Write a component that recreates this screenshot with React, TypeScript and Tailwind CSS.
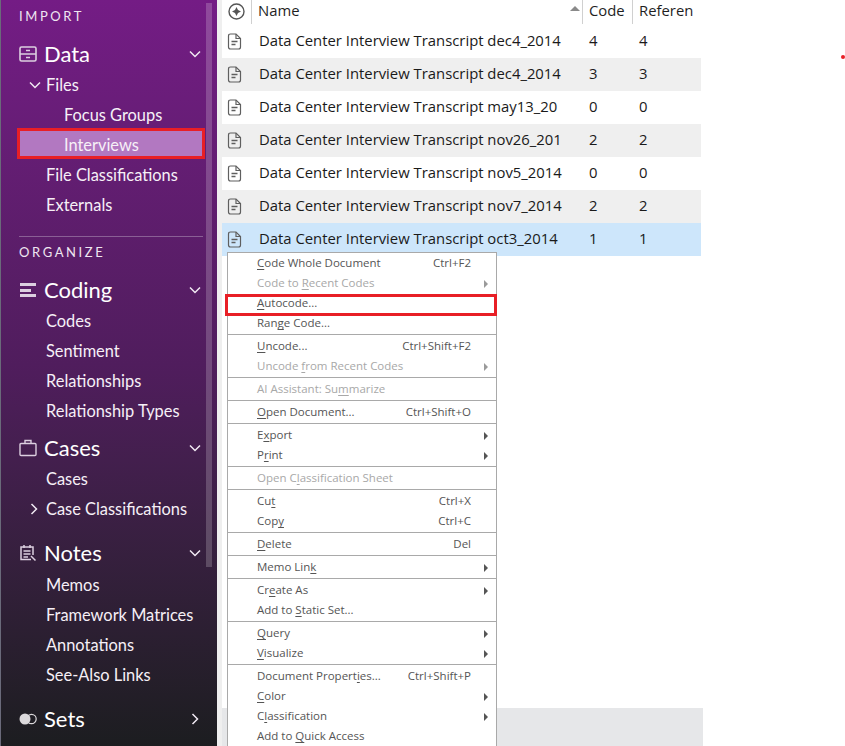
import React from "react";

const Chevron = ({ dir = "down", className = "" }: { dir?: "down" | "right"; className?: string }) => (
  <svg width="12" height="12" viewBox="0 0 12 12" className={className} fill="none" stroke="#f1e9f3" strokeWidth="1.5">
    {dir === "down" ? <path d="M1 3.5 L6 8.5 L11 3.5" /> : <path d="M3.5 1 L8.5 6 L3.5 11" />}
  </svg>
);

const DataIcon = () => (
  <svg width="18" height="18" viewBox="0 0 18 18" fill="none" stroke="#dccfe0" strokeWidth="1.6">
    <rect x="1" y="2" width="16" height="14" rx="1.5" />
    <path d="M1 9 H17 M7 5.5 H11 M7 12.5 H11" />
  </svg>
);
const CodingIcon = () => (
  <svg width="18" height="18" viewBox="0 0 18 18" fill="#dccfe0">
    <rect x="1" y="2" width="16" height="3" />
    <rect x="1" y="8" width="11" height="3" />
    <rect x="1" y="13" width="16" height="3" />
  </svg>
);
const CasesIcon = () => (
  <svg width="18" height="18" viewBox="0 0 18 18" fill="none" stroke="#dccfe0" strokeWidth="1.4">
    <rect x="1" y="4.5" width="16" height="12" rx="1" />
    <path d="M6 4.5 V1.5 H12 V4.5" />
  </svg>
);
const NotesIcon = () => (
  <svg width="18" height="18" viewBox="0 0 18 18" fill="none" stroke="#dccfe0" strokeWidth="1.5">
    <path d="M12 15.5 H2 V3 H14 V11" />
    <path d="M5 1 V4 M11 1 V4 M4.5 7 H11.5 M4.5 10 H11.5 M4.5 13 H9" />
    <path d="M12 12 L16.5 16.5" />
  </svg>
);
const SetsIcon = () => (
  <svg width="18" height="12" viewBox="0 0 18 12">
    <circle cx="6" cy="6" r="5.5" fill="#dcd9dc" />
    <circle cx="12.5" cy="6" r="4.7" fill="none" stroke="#dcd9dc" strokeWidth="1.2" />
  </svg>
);
const FileIcon = () => (
  <svg width="15" height="17" viewBox="0 0 15 17" fill="none" stroke="#5f5f5f" strokeWidth="1.2">
    <path d="M1.5 3 Q1.5 1 3.5 1 H9 L13.5 5.5 V14 Q13.5 16 11.5 16 H3.5 Q1.5 16 1.5 14 Z" />
    <path d="M9 1 V5.5 H13.5" />
    <path d="M4.5 8.5 H10.5 M4.5 11.5 H8.5" strokeWidth="1.3" />
  </svg>
);

const Heading = ({ icon, label, open = true, top }: { icon: React.ReactNode; label: string; open?: boolean; top: string }) => (
  <div className={`flex h-[30px] items-center pl-[19px] pr-[16px] ${top}`}>
    <span className="flex w-[25px] shrink-0 items-center">{icon}</span>
    <span className="flex-1 pb-[2px] text-[22px] text-white">{label}</span>
    <Chevron dir={open ? "down" : "right"} />
  </div>
);

const Item = ({ children, pl = "pl-[46px]" }: { children: React.ReactNode; pl?: string }) => (
  <div className={`flex h-[30px] items-center pt-[2px] text-[16.4px] text-[#f6f0f7] ${pl}`}>{children}</div>
);

const Caption = ({ children }: { children: React.ReactNode }) => (
  <div className="pl-[19px] text-[13px] leading-[16px] tracking-[0.2em] text-[#efe6f1]">{children}</div>
);

const Sidebar = () => (
  <aside className="relative h-[746px] w-[217px] shrink-0 overflow-hidden bg-gradient-to-b from-[#741c85] via-[#4f1d5c] to-[#1c1d20] font-['Lato',sans-serif]">
    <div className="pt-[8px]">
      <Caption>IMPORT</Caption>
      <Heading icon={<DataIcon />} label="Data" top="mt-[15px]" />
      <div className="flex h-[30px] items-center pl-[29px] pt-[2px] text-[16.4px] text-[#f6f0f7]">
        <Chevron className="mr-[5px]" />
        Files
      </div>
      <Item pl="pl-[64px]">Focus Groups</Item>
      <div className="relative flex h-[30px] items-center pl-[64px] pt-[2px] text-[16.4px] text-[#f6f0f7]">
        <div className="absolute left-[20px] top-0 h-[30px] w-[183px] bg-[#b278c1]" />
        <span className="relative">Interviews</span>
      </div>
      <Item>File Classifications</Item>
      <Item>Externals</Item>
      <div className="mx-[19px] mt-[17px] h-px w-[184px] bg-[#8a5f95]" />
      <div className="mt-[7px]"><Caption>ORGANIZE</Caption></div>
      <Heading icon={<CodingIcon />} label="Coding" top="mt-[15px]" />
      <Item>Codes</Item>
      <Item>Sentiment</Item>
      <Item>Relationships</Item>
      <Item>Relationship Types</Item>
      <Heading icon={<CasesIcon />} label="Cases" top="mt-[8px]" />
      <Item>Cases</Item>
      <div className="flex h-[30px] items-center pl-[28px] pt-[2px] text-[16.4px] text-[#f6f0f7]">
        <Chevron dir="right" className="mr-[6px]" />
        Case Classifications
      </div>
      <Heading icon={<NotesIcon />} label="Notes" top="mt-[15px] mb-[1px]" />
      <Item>Memos</Item>
      <Item>Framework Matrices</Item>
      <Item>Annotations</Item>
      <Item>See-Also Links</Item>
      <Heading icon={<SetsIcon />} label="Sets" open={false} top="mt-[15px]" />
    </div>
    <div className="absolute left-[206px] top-[3px] h-[564px] w-[6px] bg-white/20" />
    <div className="absolute left-0 top-0 h-full w-px bg-[#6a6a7a]" />
  </aside>
);

const rows = [
  ["Data Center Interview Transcript dec4_2014", "4", "4"],
  ["Data Center Interview Transcript dec4_2014", "3", "3"],
  ["Data Center Interview Transcript may13_20", "0", "0"],
  ["Data Center Interview Transcript nov26_201", "2", "2"],
  ["Data Center Interview Transcript nov5_2014", "0", "0"],
  ["Data Center Interview Transcript nov7_2014", "2", "2"],
  ["Data Center Interview Transcript oct3_2014", "1", "1"],
];

const Table = () => (
  <div className="flex h-[746px] w-[481px] shrink-0 flex-col bg-white">
    <div className="flex-1">
      <div className="flex h-[25px] items-start text-[#1f1f1f]">
        <div className="flex h-[22px] w-[29px] items-center justify-center">
          <svg width="17" height="17" viewBox="0 0 17 17">
            <circle cx="8.5" cy="8.5" r="7.5" fill="none" stroke="#555" strokeWidth="1.4" />
            <path d="M8.5 4 L10 7 L13 8.5 L10 10 L8.5 13 L7 10 L4 8.5 L7 7 Z" fill="#555" />
          </svg>
        </div>
        <div className="relative h-[24px] w-[331px] border-l border-[#d0d0d0] pl-[6px] text-[14.85px] leading-[21px]">
          Name
          <div className="absolute right-[2px] top-[6px] h-0 w-0 border-x-[5px] border-b-[5px] border-x-transparent border-b-[#8a8a8a]" />
        </div>
        <div className="h-[24px] w-[50px] border-l border-[#d0d0d0] pl-[6px] text-[14.85px] leading-[21px]">Code</div>
        <div className="h-[24px] w-[69px] border-l border-[#d0d0d0] pl-[6px] text-[14.85px] leading-[21px]">Referen</div>
      </div>
      {rows.map(([name, code, refs], i) => (
        <div
          key={i}
          className={`flex h-[33px] w-[479px] items-center text-[14.85px] text-[#1a1a1a] ${
            i === 6 ? "bg-[#cde6fb]" : i % 2 === 1 ? "bg-[#efefef]" : "bg-white"
          }`}
        >
          <span className="flex w-[37px] shrink-0 justify-start pl-[5px]"><FileIcon /></span>
          <span className="w-[330px] shrink-0 whitespace-nowrap pb-[2px]">{name}</span>
          <span className="w-[50px] shrink-0 pb-[2px]">{code}</span>
          <span className="pb-[2px]">{refs}</span>
        </div>
      ))}
    </div>
    <div className="h-[38px] bg-[#e6e7e9]" />
  </div>
);

type M = { t?: string; k?: string; sub?: boolean; off?: boolean; sep?: boolean };
const S: M = { sep: true };
const menu: M[] = [
  { t: "&Code Whole Document", k: "Ctrl+F2" },
  { t: "Code to &Recent Codes", sub: true, off: true },
  { t: "&Autocode..." },
  { t: "Ran&ge Code..." },
  S,
  { t: "&Uncode...", k: "Ctrl+Shift+F2" },
  { t: "Uncode &from Recent Codes", sub: true, off: true },
  S,
  { t: "AI Assistant: Su&mmarize", off: true },
  S,
  { t: "&Open Document...", k: "Ctrl+Shift+O" },
  S,
  { t: "E&xport", sub: true },
  { t: "P&rint", sub: true },
  S,
  { t: "Open C&lassification Sheet", off: true },
  S,
  { t: "Cu&t", k: "Ctrl+X" },
  { t: "Cop&y", k: "Ctrl+C" },
  S,
  { t: "&Delete", k: "Del" },
  S,
  { t: "Memo Lin&k", sub: true },
  S,
  { t: "Cr&eate As", sub: true },
  { t: "Add to &Static Set..." },
  S,
  { t: "&Query", sub: true },
  { t: "&Visualize", sub: true },
  S,
  { t: "Document Propert&ies...", k: "Ctrl+Shift+P" },
  { t: "&Color", sub: true },
  { t: "C&lassification", sub: true },
  { t: "Add to &Quick Access" },
];

const Label = ({ text }: { text: string }) => {
  const i = text.indexOf("&");
  return (
    <span>
      {text.slice(0, i)}
      <u className="underline-offset-2">{text[i + 1]}</u>
      {text.slice(i + 2)}
    </span>
  );
};

const Menu = () => (
  <div className="absolute left-[227px] top-[252px] w-[270px] border border-[#a9a9a9] bg-white font-['Open_Sans',sans-serif] text-[11.5px]">
    {menu.map((m, i) =>
      m.sep ? (
        <div key={i} className="flex h-[3px] items-center">
          <div className="h-px w-full bg-[#a9a9a9]" />
        </div>
      ) : (
        <div
          key={i}
          className={`relative flex h-[20px] items-center pl-[29px] pr-[25px] ${m.off ? "text-[#a8a8a8]" : "text-[#555555]"}`}
        >
          <span className="flex-1"><Label text={m.t!} /></span>
          {m.k && <span>{m.k}</span>}
          {m.sub && (
            <div className={`absolute right-[8px] top-[7px] h-0 w-0 border-y-[4px] border-l-[4px] border-y-transparent ${m.off ? "border-l-[#9a9a9a]" : "border-l-[#555]"}`} />
          )}
        </div>
      )
    )}
  </div>
);

export default function App() {
  return (
    <div className="relative flex h-[746px] w-[845px] overflow-hidden bg-white font-['Open_Sans',sans-serif]">
      <Sidebar />
      <div className="w-[5px] shrink-0 bg-[#efefef]" />
      <Table />
      <Menu />
      <div className="absolute left-[17px] top-[128px] h-[31px] w-[188px] border-[3px] border-[#e81f26]" />
      <div className="absolute left-[225px] top-[294px] h-[22px] w-[272px] border-[3px] border-[#e81f26]" />
      <div className="absolute left-[841px] top-[55px] h-[4px] w-[4px] rounded-full bg-[#e81f26]" />
    </div>
  );
}
